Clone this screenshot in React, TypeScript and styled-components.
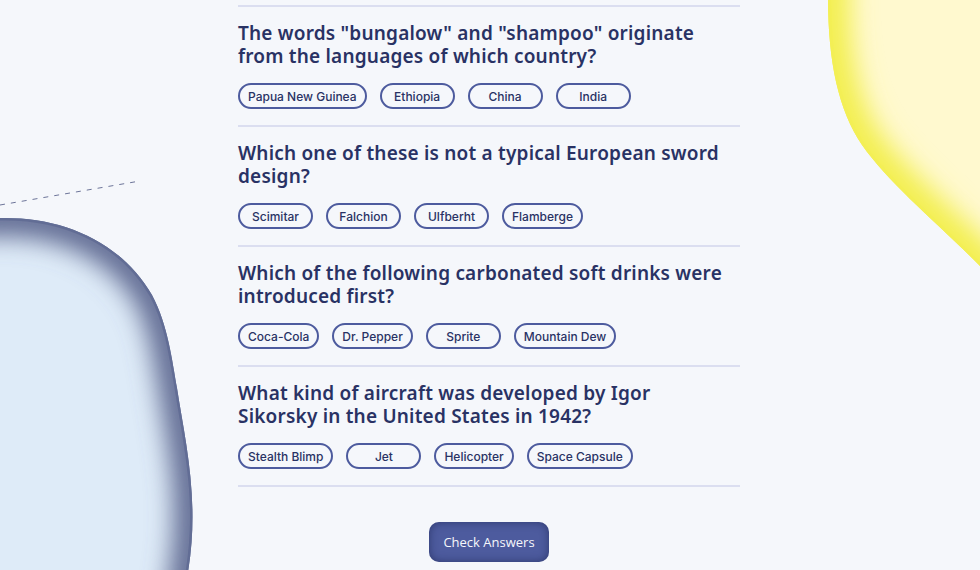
import React from "react";
import styled, { createGlobalStyle } from "styled-components";

const Global = createGlobalStyle`
  html, body { margin: 0; padding: 0; }
  body {
    background: #F5F7FB;
    font-family: "Noto Sans", "Liberation Sans", sans-serif;
    overflow: hidden;
  }
`;

const Page = styled.div`
  position: relative;
  width: 980px;
  height: 570px;
  overflow: hidden;
  background: #F5F7FB;
`;

const Decor = styled.svg`
  position: absolute;
  left: 0;
  top: 0;
  pointer-events: none;
`;

const Main = styled.main`
  position: relative;
  width: 502px;
  margin: 0 auto 0 238px;
  padding-top: 5px;
  display: flex;
  flex-direction: column;
  align-items: center;
`;

const List = styled.section`
  width: 100%;
  border-top: 2px solid #DBDEF0;
`;

const Question = styled.article`
  padding: 15px 0 16px;
  border-bottom: 2px solid #DBDEF0;
`;

const Title = styled.h2`
  margin: 0 0 15px;
  padding-right: 10px;
  font-family: "Noto Sans", sans-serif;
  font-weight: 600;
  font-size: 19px;
  line-height: 23px;
  letter-spacing: 0.2px;
  color: #293264;
`;

const Answers = styled.div`
  display: flex;
  gap: 13px;
`;

const Answer = styled.button`
  box-sizing: border-box;
  height: 26px;
  min-width: 75px;
  padding: 0 8px;
  border: 2px solid #4D5B9E;
  border-radius: 13px;
  background: transparent;
  font-family: Inter, sans-serif;
  font-weight: 500;
  font-size: 12px;
  color: #293264;
  display: flex;
  align-items: center;
  justify-content: center;
`;

const Check = styled.button`
  margin-top: 35px;
  width: 120px;
  height: 40px;
  border: none;
  border-radius: 10px;
  background: #4D5B9E;
  box-shadow: inset 0 0 8px rgba(20, 28, 70, 0.55);
  color: #F5F7FB;
  font-family: "Open Sans", sans-serif;
  font-size: 13px;
`;

const questions = [
  {
    q: 'The words "bungalow" and "shampoo" originate from the languages of which country?',
    a: ["Papua New Guinea", "Ethiopia", "China", "India"],
  },
  {
    q: "Which one of these is not a typical European sword design?",
    a: ["Scimitar", "Falchion", "Ulfberht", "Flamberge"],
  },
  {
    q: "Which of the following carbonated soft drinks were introduced first?",
    a: ["Coca-Cola", "Dr. Pepper", "Sprite", "Mountain Dew"],
  },
  {
    q: "What kind of aircraft was developed by Igor Sikorsky in the United States in 1942?",
    a: ["Stealth Blimp", "Jet", "Helicopter", "Space Capsule"],
  },
];

const yellowEdge =
  "M 828 -60 L 828 -2 C 828 60 838 110 862 145 C 890 185 940 225 985 271 L 1040 330";
const yellowFill = yellowEdge + " L 1100 330 L 1100 -60 Z";
const blueEdge =
  "M -60 219 L -2 218 C 60 216 120 240 152 295 C 168 325 172 360 177 388 C 185 440 200 500 188 572 L 180 640";
const blueFill = blueEdge + " L -60 640 Z";

function Blobs() {
  return (
    <Decor width="980" height="570" viewBox="0 0 980 570">
      <defs>
        <clipPath id="yc">
          <path d={yellowFill} />
        </clipPath>
        <clipPath id="bc">
          <path d={blueFill} />
        </clipPath>
        <filter id="blurY" x="-50%" y="-50%" width="200%" height="200%">
          <feGaussianBlur stdDeviation="13" />
        </filter>
        <filter id="blurB" x="-50%" y="-50%" width="200%" height="200%">
          <feGaussianBlur stdDeviation="13" />
        </filter>
      </defs>
      <g clipPath="url(#yc)">
        <path d={yellowFill} fill="#FFF9CF" />
        <path d={yellowEdge} fill="none" stroke="#F3EF50" strokeWidth="44" filter="url(#blurY)" />
        <path d={yellowEdge} fill="none" stroke="#F3EF55" strokeWidth="6" />
      </g>
      <g clipPath="url(#bc)">
        <path d={blueFill} fill="#DEEBF8" />
        <path d={blueEdge} fill="none" stroke="#5D6890" strokeWidth="36" filter="url(#blurB)" />
        <path d={blueEdge} fill="none" stroke="#626D95" strokeWidth="5" />
      </g>
      <line x1="0" y1="205" x2="140" y2="181" stroke="#3E4877" strokeWidth="1" strokeDasharray="5 6" opacity="0.75" />
    </Decor>
  );
}

export default function App() {
  return (
    <Page>
      <Global />
      <Blobs />
      <Main>
        <List>
          {questions.map((item) => (
            <Question key={item.q}>
              <Title>{item.q}</Title>
              <Answers>
                {item.a.map((ans) => (
                  <Answer key={ans}>{ans}</Answer>
                ))}
              </Answers>
            </Question>
          ))}
        </List>
        <Check>Check Answers</Check>
      </Main>
    </Page>
  );
}
